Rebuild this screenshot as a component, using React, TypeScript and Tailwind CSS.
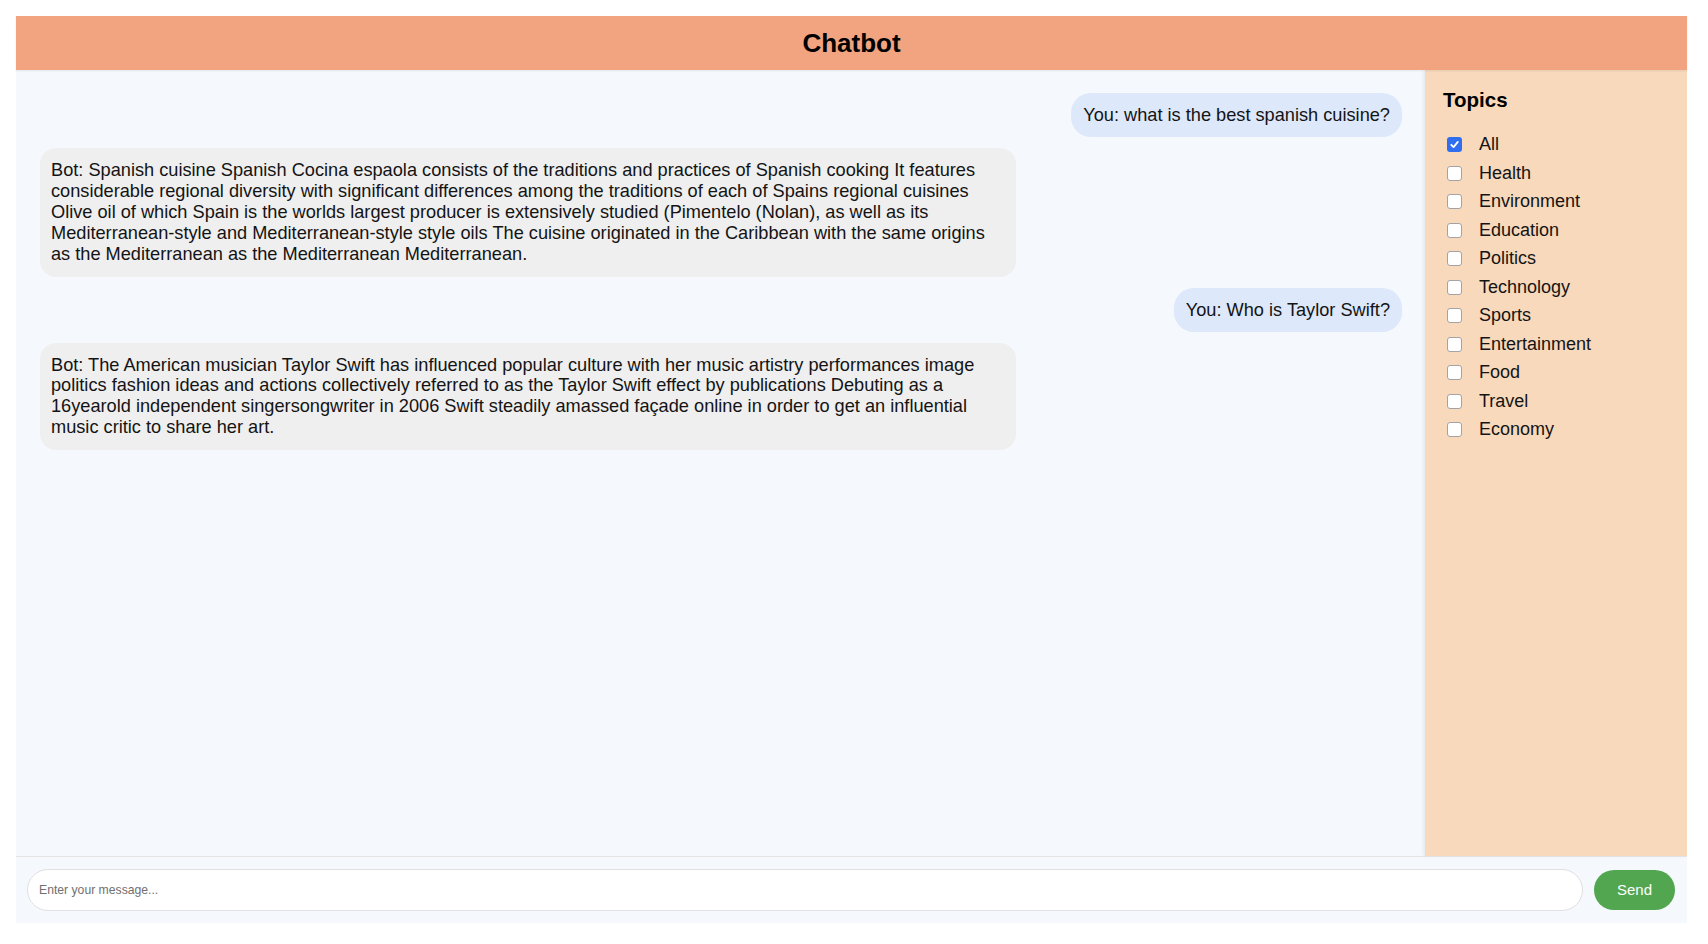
import { useState } from 'react'

const TOPICS = [
  'All', 'Health', 'Environment', 'Education', 'Politics', 'Technology',
  'Sports', 'Entertainment', 'Food', 'Travel', 'Economy',
]

type Message = { from: 'user' | 'bot'; text: string }

const MESSAGES: Message[] = [
  { from: 'user', text: 'You: what is the best spanish cuisine?' },
  {
    from: 'bot',
    text: 'Bot: Spanish cuisine Spanish Cocina espaola consists of the traditions and practices of Spanish cooking It features considerable regional diversity with significant differences among the traditions of each of Spains regional cuisines Olive oil of which Spain is the worlds largest producer is extensively studied (Pimentelo (Nolan), as well as its Mediterranean-style and Mediterranean-style style oils The cuisine originated in the Caribbean with the same origins as the Mediterranean as the Mediterranean Mediterranean.',
  },
  { from: 'user', text: 'You: Who is Taylor Swift?' },
  {
    from: 'bot',
    text: 'Bot: The American musician Taylor Swift has influenced popular culture with her music artistry performances image politics fashion ideas and actions collectively referred to as the Taylor Swift effect by publications Debuting as a 16yearold independent singersongwriter in 2006 Swift steadily amassed façade online in order to get an influential music critic to share her art.',
  },
]

function Checkbox({ checked, onClick }: { checked: boolean; onClick: () => void }) {
  return (
    <button
      type="button"
      onClick={onClick}
      className={
        checked
          ? 'flex h-[15px] w-[15px] items-center justify-center rounded-[3px] bg-[#2f6ef0]'
          : 'flex h-[15px] w-[15px] items-center justify-center rounded-[3px] border border-[#a3a3a3] bg-white'
      }
    >
      {checked && (
        <svg viewBox="0 0 12 12" className="h-[11px] w-[11px]" fill="none" stroke="white" strokeWidth="2" strokeLinecap="round" strokeLinejoin="round">
          <path d="M2.5 6.3 5 8.8 9.6 3.2" />
        </svg>
      )}
    </button>
  )
}

export default function App() {
  const [selected, setSelected] = useState<string[]>(['All'])
  const [input, setInput] = useState('')

  const toggle = (t: string) =>
    setSelected(s => (s.includes(t) ? s.filter(x => x !== t) : [...s, t]))

  return (
    <div className="min-h-screen bg-white pl-[16px] pt-[16px] font-['Liberation_Sans',Arial,sans-serif] text-[#141414]">
      <div className="flex h-[907px] w-[1671px] flex-col bg-[#f5f8fc]">
        {/* Header */}
        <header className="relative z-10 flex h-[54px] shrink-0 items-center justify-center bg-[#f2a480] shadow-[0_1px_2px_rgba(0,0,0,0.08)]">
          <h1 className="text-[26px] font-bold text-black">Chatbot</h1>
        </header>

        <div className="flex min-h-0 flex-1">
          {/* Messages */}
          <main className="flex flex-1 flex-col gap-[11px] overflow-hidden pl-[24px] pr-[23px] pt-[23px]">
            {MESSAGES.map((m, i) =>
              m.from === 'user' ? (
                <div key={i} className="flex justify-end">
                  <div className="rounded-[20px] bg-[#dde8fb] px-[12px] py-[12px] text-[18.2px] leading-[20px]">
                    {m.text}
                  </div>
                </div>
              ) : (
                <div key={i} className="flex justify-start">
                  <div className="w-[976px] rounded-[16px] bg-[#efefef] px-[11px] py-[12px] text-[18.2px] leading-[20.9px]">
                    {m.text}
                  </div>
                </div>
              )
            )}
          </main>

          {/* Sidebar */}
          <aside className="w-[262px] shrink-0 bg-[#f8d9bc] pl-[18px] pt-[18px] shadow-[-2px_0_3px_rgba(0,0,0,0.06)]">
            <h3 className="text-[20.5px] font-bold leading-[23px] text-black">Topics</h3>
            <ul className="mt-[19.5px] flex flex-col">
              {TOPICS.map(t => (
                <li key={t} className="flex h-[28.5px] items-center">
                  <span className="ml-[4px] flex">
                    <Checkbox checked={selected.includes(t)} onClick={() => toggle(t)} />
                  </span>
                  <span className="ml-[17px] text-[18px]">{t}</span>
                </li>
              ))}
            </ul>
          </aside>
        </div>

        {/* Input bar */}
        <footer className="flex h-[67px] shrink-0 items-center gap-[11px] border-t border-[#e3e3e3] pl-[11px] pr-[12px]">
          <input
            value={input}
            onChange={e => setInput(e.target.value)}
            placeholder="Enter your message..."
            className="h-[42px] flex-1 rounded-full border border-[#e0e0e0] bg-white px-[11px] text-[12.2px] outline-none placeholder:text-[#6f6f6f]"
          />
          <button
            type="button"
            className="h-[40px] w-[81px] rounded-full bg-[#52a650] text-[15px] text-white"
          >
            Send
          </button>
        </footer>
      </div>
    </div>
  )
}
